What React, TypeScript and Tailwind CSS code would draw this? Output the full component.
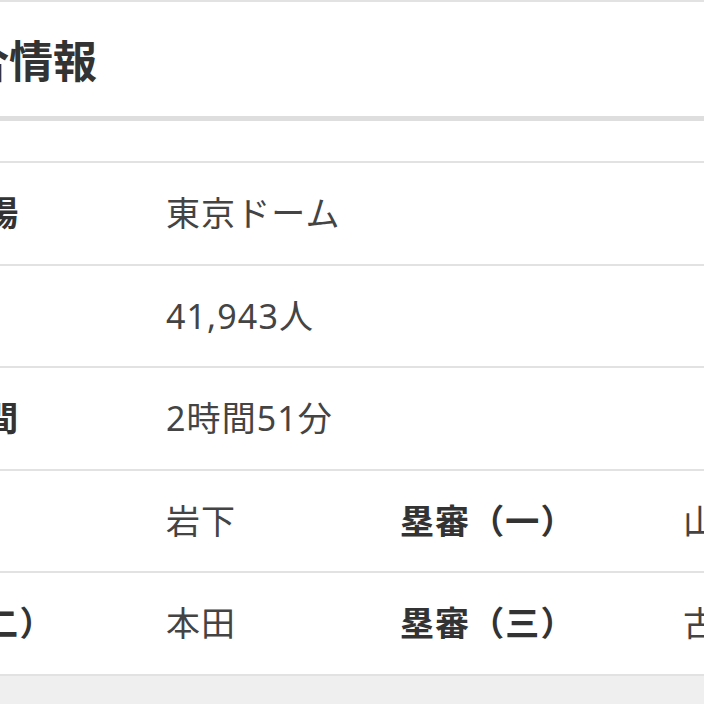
const font = { fontFamily: '"Noto Sans CJK JP", "Noto Sans", sans-serif' };
const cellFont = { fontFamily: '"Noto Sans", "Noto Sans CJK JP", sans-serif' };

interface Row {
  label: string;
  value: string;
  label2?: string;
  value2?: string;
}

const rows: Row[] = [
  { label: '開催球場', value: '東京ドーム' },
  { label: '観客数', value: '41,943人' },
  { label: '試合時間', value: '2時間51分' },
  { label: '球審', value: '岩下', label2: '塁審（一）', value2: '山路' },
  { label: '塁審（二）', value: '本田', label2: '塁審（三）', value2: '古賀' },
];

const App = () => {
  return (
    <div className="w-[704px] h-[704px] overflow-hidden bg-[#efefef]" style={font}>
      <div className="ml-[-121px] w-[1045px] bg-white">
        {/* Title */}
        <div className="h-[116px] border-t-2 border-[#e2e2e2] flex items-center pl-[42px]">
          <h2 className="text-[44px] font-bold text-[#333] leading-none">試合情報</h2>
        </div>
        <div className="h-[5px] bg-[#dedede]" />
        <div className="h-[40px]" />

        {/* Info table */}
        <div className="border-b-2 border-[#e2e2e2]" style={cellFont}>
          {rows.map((r) => (
            <div
              key={r.label}
              className="h-[102.5px] border-t-2 border-[#e2e2e2] grid grid-cols-[287px_234px_283px_241px] items-center text-[34px] tracking-[1.1px] leading-none"
            >
              <span className="font-bold text-[#333] whitespace-nowrap">{r.label}</span>
              {r.label2 ? (
                <>
                  <span className="text-[#444] whitespace-nowrap">{r.value}</span>
                  <span className="font-bold text-[#333] whitespace-nowrap">{r.label2}</span>
                  <span className="text-[#444] whitespace-nowrap">{r.value2}</span>
                </>
              ) : (
                <span className="col-span-3 text-[#444] whitespace-nowrap">{r.value}</span>
              )}
            </div>
          ))}
        </div>
      </div>
    </div>
  );
};

export default App;
